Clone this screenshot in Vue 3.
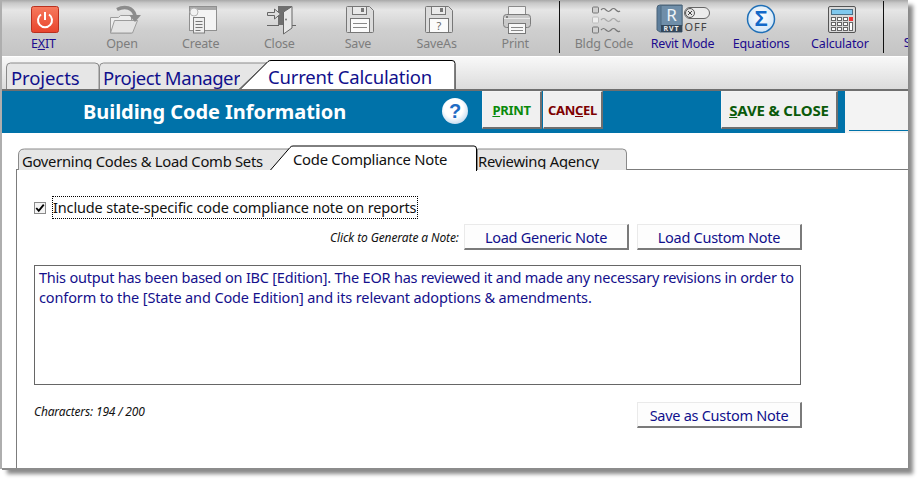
<script setup>
const noteLines = [
  'This output has been based on IBC [Edition]. The EOR has reviewed it and made any necessary revisions in order to',
  'conform to the [State and Code Edition] and its relevant adoptions & amendments.'
]
</script>

<template>
  <div class="stage">
    <div class="window">
      <div class="toolbar">
        <div class="tool">
          <svg class="ico" viewBox="0 0 40 32">
            <defs>
              <linearGradient id="red" x1="0" y1="0" x2="0" y2="1"><stop offset="0" stop-color="#f77a5e"/><stop offset="1" stop-color="#e8442c"/></linearGradient>
            </defs>
            <rect x="6.500" y="2.500" width="27" height="26" rx="2" fill="url(#red)" stroke="#b9301f"/>
            <path d="M16 10.500a7 7 0 1 0 8 0" fill="none" stroke="#fff" stroke-width="2"/>
            <path d="M20 8v8" stroke="#fff" stroke-width="2"/>
          </svg>
          <span class="lbl on"><span>E<u>X</u>IT</span></span>
        </div>
        <div class="tool">
          <svg class="ico" viewBox="0 0 40 32">
            <path d="M6.500 29V13.500h8l2-2h11V29z" fill="#ededed" stroke="#9c9c9c"/>
            <path d="M6.500 29l4-12.500h23L28.500 29z" fill="#e4e4e4" stroke="#9c9c9c"/>
            <path d="M13 5.500c8-4 16-2 18 6" fill="none" stroke="#8c8c8c" stroke-width="3.500"/>
            <path d="M25 11h12l-6 7z" fill="#8c8c8c"/>
          </svg>
          <span class="lbl">Open</span>
        </div>
        <div class="tool">
          <svg class="ico" viewBox="0 0 40 32">
            <rect x="6.500" y="2.500" width="27" height="24" fill="#f4f4f4" stroke="#8f8f8f"/>
            <rect x="7" y="3" width="26" height="3" fill="#a9a9a9"/>
            <circle cx="11" cy="8" r="4" fill="#f2f2f2" stroke="#b5b5b5"/>
            <rect x="10.500" y="13.500" width="11" height="15.500" fill="#eee" stroke="#7f7f7f"/>
            <path d="M12.500 17.500h7M12.500 20.500h7M12.500 23.500h7M12.500 26.500h5" stroke="#777"/>
          </svg>
          <span class="lbl">Create</span>
        </div>
        <div class="tool">
          <svg class="ico" viewBox="0 0 40 32">
            <path d="M17 2h14v19H17z" fill="#6f6f6f"/>
            <path d="M22.500 8L31 2.500V24l-8.500 6z" fill="#e8e8e8" stroke="#666"/>
            <circle cx="25" cy="15.500" r="1" fill="#777"/>
            <path d="M6.500 8.500h7V5l6 5-6 5v-3.500h-7z" fill="#ddd" stroke="#666"/>
            <path d="M6 21.500h12M31 21.500h4" stroke="#666"/>
          </svg>
          <span class="lbl">Close</span>
        </div>
        <div class="tool">
          <svg class="ico" viewBox="0 0 40 32">
            <path d="M6.500 3.500a1 1 0 0 1 1-1h22l4 4v21a1 1 0 0 1-1 1h-25a1 1 0 0 1-1-1z" fill="#dcdcdc" stroke="#777"/>
            <rect x="12.500" y="2.500" width="14" height="8" fill="#eaeaea" stroke="#777"/>
            <rect x="21" y="4" width="3" height="4" fill="#777"/>
            <rect x="10.500" y="14.500" width="19" height="14" fill="#fbfbfb" stroke="#777"/>
            <path d="M13 19.500h14M13 23.500h14" stroke="#888"/>
          </svg>
          <span class="lbl">Save</span>
        </div>
        <div class="tool">
          <svg class="ico" viewBox="0 0 40 32">
            <path d="M6.500 3.500a1 1 0 0 1 1-1h22l4 4v21a1 1 0 0 1-1 1h-25a1 1 0 0 1-1-1z" fill="#dcdcdc" stroke="#777"/>
            <rect x="12.500" y="2.500" width="14" height="8" fill="#eaeaea" stroke="#777"/>
            <rect x="21" y="4" width="3" height="4" fill="#777"/>
            <rect x="10.500" y="14.500" width="19" height="14" fill="#fbfbfb" stroke="#777"/>
            <text x="20" y="26" class="svgq">?</text>
          </svg>
          <span class="lbl">SaveAs</span>
        </div>
        <div class="tool">
          <svg class="ico" viewBox="0 0 40 32">
            <path d="M11.500 11V2.500h17V11" fill="#f2f2f2" stroke="#8a8a8a"/>
            <rect x="6.500" y="10.500" width="27" height="13" rx="3" fill="#c9c9c9" stroke="#7c7c7c"/>
            <path d="M7 14.500h26" stroke="#e9e9e9"/>
            <circle cx="10" cy="13" r="1" fill="#666"/>
            <rect x="11.500" y="19.500" width="17" height="10" fill="#f7f7f7" stroke="#777"/>
            <path d="M14 23.500h12M14 26.500h12" stroke="#888"/>
          </svg>
          <span class="lbl">Print</span>
        </div>
        <div class="sep"></div>
        <div class="tool">
          <svg class="ico" viewBox="0 0 40 32">
            <rect x="6.500" y="3" width="6" height="6" rx="1" fill="#cfcfcf" stroke="#777"/>
            <rect x="6.500" y="13" width="6" height="6" rx="1" fill="#eee" stroke="#bdbdbd"/>
            <rect x="6.500" y="23" width="6" height="6" rx="1" fill="#cfcfcf" stroke="#777"/>
            <path d="M15 6c2-2 3-2 5 0s3 2 5 0 3-2 5 0 3 2 4 1" fill="none" stroke="#777" stroke-width="1.200"/>
            <path d="M15 16c2-2 3-2 5 0s3 2 5 0 3-2 5 0 3 2 4 1" fill="none" stroke="#a8a8a8" stroke-width="1.200"/>
            <path d="M15 26c2-2 3-2 5 0s3 2 5 0 3-2 5 0 3 2 4 1" fill="none" stroke="#777" stroke-width="1.200"/>
          </svg>
          <span class="lbl">Bldg Code</span>
        </div>
        <div class="tool">
          <svg class="ico ico-revit" viewBox="0 0 60 32">
            <path d="M4 4a3 3 0 0 1 3-3h22v27H7l-3-2z" fill="#5d7e9c" stroke="#4a6378"/>
            <rect x="8" y="1.500" width="21" height="20" fill="#6f8ea9" stroke="#4f6a80"/>
            <rect x="8" y="21" width="21" height="7" fill="#33475a"/>
            <text x="18.500" y="17" class="svgr">R</text>
            <text x="18.500" y="27" class="svgrvt">RVT</text>
            <rect x="31.500" y="3.500" width="25" height="11" rx="5.500" fill="#ececec" stroke="#666"/>
            <circle cx="37" cy="9" r="4.500" fill="#e5e5e5" stroke="#555"/>
            <path d="M35 7l4 4M39 7l-4 4" stroke="#444"/>
            <text x="43" y="27" class="svgoff">OFF</text>
          </svg>
          <span class="lbl on">Revit Mode</span>
        </div>
        <div class="tool">
          <svg class="ico ico-eq" viewBox="0 0 40 32">
            <defs>
              <radialGradient id="sph" cx="0.5" cy="0.4" r="0.6"><stop offset="0" stop-color="#fff"/><stop offset="1" stop-color="#cfe4f6"/></radialGradient>
            </defs>
            <circle cx="20" cy="15" r="13.500" fill="url(#sph)" stroke="#1f6fb6" stroke-width="1.500"/>
            <text x="20" y="22" class="svgs">Σ</text>
          </svg>
          <span class="lbl on">Equations</span>
        </div>
        <div class="tool">
          <svg class="ico" viewBox="0 0 40 32">
            <rect x="6.500" y="2.500" width="27" height="26" rx="1.500" fill="#d9d9d9" stroke="#555"/>
            <rect x="9.500" y="5.500" width="21" height="5" fill="#7fc8ee" stroke="#4a6f86"/>
            <g fill="#fff" stroke="#666">
              <rect x="9.500" y="13.500" width="4" height="3"/><rect x="15.500" y="13.500" width="4" height="3"/><rect x="21.500" y="13.500" width="4" height="3"/>
              <rect x="9.500" y="18.500" width="4" height="3"/><rect x="15.500" y="18.500" width="4" height="3"/><rect x="21.500" y="18.500" width="4" height="3"/>
              <rect x="9.500" y="23.500" width="4" height="3"/><rect x="15.500" y="23.500" width="4" height="3"/><rect x="21.500" y="23.500" width="4" height="3"/>
              <rect x="27.500" y="18.500" width="3" height="8"/>
            </g>
            <rect x="27" y="13" width="4" height="4" fill="#e33"/>
          </svg>
          <span class="lbl on">Calculator</span>
        </div>
        <div class="sep sep-end"></div>
        <div class="tool-cut"><span class="lbl on">S</span></div>
      </div>

      <div class="tabstrip">
        <div class="tab tab-projects">
          <svg class="shape" viewBox="0 0 93 31">
            <path d="M.5 31V9q0-4 4-4H89q4 0 4 4v22" fill="#e6e6e6" stroke="#8a8a8a"/>
          </svg>
          <span class="tabtext">Projects</span>
        </div>
        <div class="tab tab-manager">
          <svg class="shape" viewBox="0 0 170 31">
            <path d="M.5 31V9q0-4 4-4H168L140 31" fill="#e6e6e6" stroke="#8a8a8a"/>
          </svg>
          <span class="tabtext">Project Manager</span>
        </div>
        <div class="tab tab-current">
          <svg class="shape" viewBox="0 0 216 31">
            <path d="M.5 31L28 3.500q1-1 3-1H212q3 0 3 3V31" fill="#fff" stroke="#000"/>
          </svg>
          <span class="tabtext">Current Calculation</span>
        </div>
      </div>

      <div class="headrow">
        <div class="bar">
          <span class="title">Building Code Information</span>
          <svg class="help" viewBox="0 0 28 28">
            <defs>
              <radialGradient id="hlp" cx="0.45" cy="0.4" r="0.65"><stop offset="0.55" stop-color="#fff"/><stop offset="1" stop-color="#bcd6ee"/></radialGradient>
            </defs>
            <circle cx="14" cy="14" r="13" fill="url(#hlp)"/>
            <text x="14" y="21" class="svgh">?</text>
          </svg>
          <button class="hbtn b-print"><u>P</u>RINT</button>
          <button class="hbtn b-cancel">CAN<u>C</u>EL</button>
          <button class="hbtn b-save"><u>S</u>AVE &amp; CLOSE</button>
        </div>
        <div class="barrest"><div class="barline"></div></div>
      </div>

      <div class="body">
        <div class="subtabs">
          <div class="stab st-gov">
            <svg class="shape" viewBox="0 0 274 24">
              <path d="M.5 24V9q0-6 6-6H273L253 24" fill="#e6e6e6" stroke="#8a8a8a"/>
            </svg>
            <span class="stext">Governing Codes &amp; Load Comb Sets</span>
          </div>
          <div class="stab st-code">
            <svg class="shape" viewBox="0 0 207 26">
              <path d="M.5 25L20 2.500q1-1.500 3-1.500H204q2.500 0 2.500 3V26" fill="#fff" stroke="#000"/>
            </svg>
            <span class="stext">Code Compliance Note</span>
          </div>
          <div class="stab st-rev">
            <svg class="shape" viewBox="0 0 150 24">
              <path d="M.5 24V3h145q4 0 4 4v17" fill="#e6e6e6" stroke="#8a8a8a"/>
            </svg>
            <span class="stext">Reviewing Agency</span>
          </div>
        </div>

        <div class="panel">
          <div class="checkrow">
            <span class="cb">
              <svg viewBox="0 0 12 12" width="10" height="10"><path d="M1.500 6l3 3.500L10.500 2" fill="none" stroke="#000" stroke-width="2.200"/></svg>
            </span>
            <span class="cbtext">Include state-specific code compliance note on reports</span>
          </div>
          <div class="genrow">
            <span class="small">Click to Generate a Note:</span>
            <button class="btn">Load Generic Note</button>
            <button class="btn">Load Custom Note</button>
          </div>
          <div class="note">
            <div v-for="l in noteLines" :key="l" class="noteline">{{ l }}</div>
          </div>
          <div class="footrow">
            <span class="small chars">Characters: 194 / 200</span>
            <button class="btn">Save as Custom Note</button>
          </div>
        </div>
      </div>
    </div>
  </div>
</template>

<style>
html, body { margin: 0; background: #fff; }
</style>

<style scoped>
.stage { width: 923px; height: 485px; overflow: hidden; background: #fff; font-family: "Noto Sans", sans-serif; }
.window { width: 906px; height: 469px; margin-left: 2px; background: #fff; box-shadow: -2px 0 0 #aeaeae, 0 1px 0 #8c8c8c, 5px 5px 4px #8a8a8a; display: flex; flex-direction: column; }

.toolbar { height: 56px; display: flex; flex: none; padding-left: 2px; overflow: hidden; background: linear-gradient(#a8a8a8 0, #c8c8c8 3px, #e6e6e6 10px, #cfcfcf 30px, #c4c4c4 56px); box-sizing: border-box; }
.tool { width: 78.67px; flex: none; display: flex; flex-direction: column; align-items: center; padding-top: 4px; box-sizing: border-box; }
.ico { width: 40px; height: 32px; display: block; flex: none; margin-left: 4px; }
.ico-revit { width: 60px; margin-left: 0; }
.ico-eq { margin-left: 0; }
.lbl { font-size: 12.500px; line-height: 16px; margin-top: -0.5px; color: #7d7d7d; white-space: nowrap; letter-spacing: -0.18px; }
.lbl.on { color: #1c0b8e; }
.sep { width: 1px; height: 52px; margin: 1px 4.500px 0; background: #111; flex: none; }
.sep-end { margin: 1px 0 0 3.500px; }
.tool-cut { display: flex; padding: 35.500px 0 0 20px; }
.svgq { font: 11px "Noto Sans", sans-serif; fill: #666; text-anchor: middle; }
.svgr { font: 17px "Noto Sans", sans-serif; fill: #eef3f7; text-anchor: middle; }
.svgrvt { font: bold 7px "Noto Sans", sans-serif; fill: #eee; text-anchor: middle; letter-spacing: 1px; }
.svgoff { font: 11px "Noto Sans", sans-serif; fill: #444; text-anchor: middle; letter-spacing: 1px; }
.svgs { font: bold 22px "Liberation Sans", sans-serif; fill: #1269c8; text-anchor: middle; }
.svgh { font: bold 20px "Liberation Sans", sans-serif; fill: #1f6cc4; text-anchor: middle; }

.tabstrip { height: 34px; flex: none; box-sizing: border-box; margin-top: 1px; display: flex; padding-left: 4px; align-items: flex-end; background: linear-gradient(#f8f8f8, #dcdcdc); border-bottom: 2px solid #6f6f6f; overflow: hidden; }
.tab { position: relative; height: 31px; flex: none; }
.tab-projects { width: 93px; }
.tab-manager { width: 141px; }
.tab-current { width: 216px; z-index: 2; }
.shape { position: absolute; left: 0; top: 0; height: 100%; display: block; }
.tab-projects .shape { width: 93px; }
.tab-manager .shape { width: 170px; }
.tab-current .shape { width: 216px; }
.tabtext { position: relative; display: block; font-size: 18.500px; line-height: 25px; height: 31px; overflow: hidden; color: #10108c; white-space: nowrap; letter-spacing: -0.35px; padding-top: 7px; box-sizing: border-box; }
.tab-projects .tabtext { padding-left: 5px; letter-spacing: -0.1px; }
.tab-manager .tabtext { padding-left: 4px; letter-spacing: -0.42px; }
.tab-current .tabtext { padding-left: 28px; padding-top: 6px; letter-spacing: -0.2px; }

.headrow { display: flex; height: 42px; flex: none; }
.bar { width: 843px; flex: none; background: #0072a9; display: flex; align-items: flex-start; box-sizing: border-box; padding-left: 81px; }
.title { width: 358px; flex: none; color: #fff; font-weight: 700; font-size: 20px; line-height: 41px; white-space: nowrap; letter-spacing: -0.05px; }
.help { width: 28px; height: 28px; margin-top: 6px; flex: none; }
.hbtn { height: 38px; margin: 0; padding: 0; background: #f0f0f0; border: 1px solid #f4f4f4; border-right: 2px solid #6f6f6f; border-bottom: 2px solid #6f6f6f; font-family: "Noto Sans", sans-serif; font-weight: 700; font-size: 13px; box-sizing: border-box; white-space: nowrap; flex: none; letter-spacing: -0.3px; }
.b-print { width: 60px; margin-left: 13px; color: #0a8a0a; }
.b-cancel { width: 60px; margin-left: 1px; color: #7d0000; }
.b-save { width: 117px; margin-left: 118px; color: #0a5a0a; font-size: 15px; letter-spacing: -0.15px; }
.barrest { flex: 1; background: #f3f3f3; padding: 39px 0 0 4px; box-sizing: border-box; }
.barline { height: 1px; background: #0072a9; }

.body { flex: 1; min-height: 0; display: flex; flex-direction: column; padding: 12px 0 0 14px; box-sizing: border-box; border-bottom: 1px solid #8c8c8c; }
.subtabs { height: 25px; flex: none; display: flex; align-items: flex-end; padding-left: 2px; position: relative; z-index: 1; margin-bottom: -1px; }
.stab { position: relative; flex: none; }
.st-gov { width: 252px; height: 24px; }
.st-gov .shape { width: 274px; }
.st-code { width: 207px; height: 26px; z-index: 2; margin-bottom: -1px; }
.st-code .shape { width: 207px; }
.st-rev { width: 150px; height: 24px; }
.st-rev .shape { width: 150px; }
.stext { position: relative; display: block; overflow: hidden; white-space: nowrap; font-size: 14.800px; color: #111; letter-spacing: -0.25px; height: 23px; line-height: 20px; padding-top: 5px; box-sizing: border-box; }
.st-gov .stext { padding-left: 4px; letter-spacing: -0.28px; }
.st-code .stext { padding: 4px 0 0 23px; }
.st-rev .stext { padding-left: 1px; }

.panel { flex: 1; border-left: 1px solid #7c7c7c; border-top: 1px solid #7c7c7c; padding: 26px 0 0 17px; min-height: 0; box-sizing: border-box; }
.checkrow { display: flex; align-items: center; height: 23px; }
.cb { width: 12px; height: 12px; box-sizing: border-box; border: 1px solid #8a8a8a; background: #f4f4f4; display: flex; align-items: center; justify-content: center; flex: none; }
.cbtext { margin-left: 6px; border: 1px dotted #000; font-size: 14.500px; line-height: 21px; color: #111; white-space: nowrap; letter-spacing: -0.15px; width: 366px; box-sizing: border-box; }
.genrow { display: flex; align-items: center; height: 26px; margin-top: 5px; padding-left: 296px; }
.small { font-style: italic; font-size: 12px; color: #111; white-space: nowrap; letter-spacing: -0.1px; }
.genrow .small { width: 134px; flex: none; }
.chars { margin-top: -8px; letter-spacing: -0.15px; }
.btn { width: 165px; height: 26px; box-sizing: border-box; background: #fdfdfd; border: 1px solid #eaeaea; border-right: 2px solid #7a7a7a; border-bottom: 2px solid #7a7a7a; font-family: "Noto Sans", sans-serif; font-size: 14.500px; color: #10108c; padding: 0; letter-spacing: -0.27px; white-space: nowrap; flex: none; }
.genrow .btn + .btn { margin-left: 8px; }
.note { width: 767px; height: 120px; margin-top: 15px; box-sizing: border-box; border: 1px solid #666; padding: 1px 0 0 4px; }
.noteline { font-size: 14.500px; line-height: 20px; color: #14108c; white-space: nowrap; letter-spacing: -0.22px; }
.noteline:nth-child(2) { letter-spacing: -0.13px; }
.footrow { display: flex; align-items: center; justify-content: space-between; width: 768px; margin-top: 17px; }
</style>
